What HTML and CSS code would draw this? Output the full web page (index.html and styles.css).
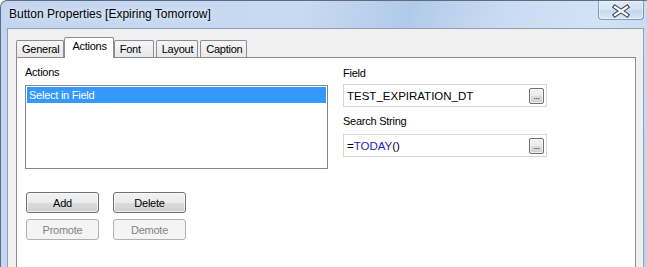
FILE: index.html
```html
<!DOCTYPE html>
<html lang="en">
<head>
    <meta charset="UTF-8">
    <title>Button Properties</title>
    <link rel="stylesheet" href="styles.css">
</head>
<body>
    <div class="window">
        <div class="titlebar">
            <span class="title">Button Properties [Expiring Tomorrow]</span>
            <div class="close">
                <svg width="44" height="18" viewBox="0 0 44 18">
                    <path d="M16 6 L28 14 M28 6 L16 14" stroke="#3b4658" stroke-width="4.4" stroke-linecap="square" fill="none"/>
                    <path d="M16 6 L28 14 M28 6 L16 14" stroke="#ffffff" stroke-width="2.2" stroke-linecap="square" fill="none"/>
                </svg>
            </div>
        </div>

        <div class="client">
            <div class="tabs">
                <div class="tab">General</div>
                <div class="tab active">Actions</div>
                <div class="tab">Font</div>
                <div class="tab">Layout</div>
                <div class="tab">Caption</div>
            </div>

            <div class="panel">
                <div class="col-left">
                    <div class="label">Actions</div>
                    <div class="listbox">
                        <div class="item selected">Select in Field</div>
                    </div>
                    <div class="buttons">
                        <button class="btn">Add</button>
                        <button class="btn">Delete</button>
                        <button class="btn" disabled>Promote</button>
                        <button class="btn" disabled>Demote</button>
                    </div>
                </div>

                <div class="col-right">
                    <div class="label">Field</div>
                    <div class="field">
                        <span class="value">TEST_EXPIRATION_DT</span>
                        <button class="dots">...</button>
                    </div>
                    <div class="label label-gap">Search String</div>
                    <div class="field">
                        <span class="value">=<span class="fn">TODAY</span>()</span>
                        <button class="dots">...</button>
                    </div>
                </div>
            </div>
        </div>
    </div>
</body>
</html>
```

FILE: styles.css
```css
body {
    margin: 0;
    height: 267px;
    overflow: hidden;
    background: #fff;
    font-family: "Liberation Sans", Arial, sans-serif;
}
.window {
    width: 652px;
    height: 267px;
    box-sizing: border-box;
    border: 1px solid #5f6d80;
    border-bottom: none;
    border-radius: 7px 7px 0 0;
    padding: 0 7px 0 6px;
    display: flex;
    flex-direction: column;
    background: linear-gradient(105deg, #c3d6ef 0%, #c8daf1 42%, #b2cae9 57%, #c9dbf2 70%, #d3e3f6 84%, #bcd1ed 100%);
}
.titlebar {
    display: flex;
    height: 27px;
}
.title {
    padding: 6px 0 0 2px;
    font-size: 12px;
    line-height: 15px;
    color: #000;
    text-shadow: 0 0 6px rgba(255,255,255,0.9);
}
.close {
    margin-left: auto;
    width: 46px;
    height: 19px;
    box-sizing: border-box;
    border: 1px solid rgba(55,75,105,0.5);
    border-top: none;
    border-radius: 0 0 4px 4px;
    box-shadow: inset 0 0 0 1px rgba(255,255,255,0.45);
    background: linear-gradient(rgba(255,255,255,0.3), rgba(255,255,255,0.1) 50%, rgba(120,150,190,0.12) 50%, rgba(255,255,255,0.2));
    display: flex;
    align-items: center;
    justify-content: center;
}
.client {
    flex: 1;
    min-height: 0;
    border: 1px solid #8e9fb6;
    border-bottom: none;
    background: #f0f0f0;
    padding: 8px 7px 0 8px;
    display: flex;
    flex-direction: column;
}
.tabs {
    display: flex;
    align-items: flex-end;
    gap: 2px;
}
.tab {
    height: 17px;
    min-width: 40px;
    box-sizing: border-box;
    border: 1px solid #898c95;
    border-bottom: none;
    border-radius: 2px 2px 0 0;
    padding: 2px 4px 0 5px;
    font-size: 11px;
    letter-spacing: -0.25px;
    line-height: 13px;
    color: #000;
    background: linear-gradient(#f5f5f5, #e8e8e8);
}
.tab.active {
    height: 21px;
    margin: 0 -2px -1px;
    padding: 2px 6px 0 7px;
    background: #fff;
    position: relative;
    z-index: 1;
}
.panel {
    flex: 1;
    min-height: 0;
    background: #fff;
    border: 1px solid #898c95;
    border-bottom: none;
    padding: 8px 0 0 8px;
    display: flex;
    gap: 15px;
}
.label {
    font-size: 11px;
    letter-spacing: -0.25px;
    line-height: 13px;
    height: 13px;
    color: #000;
}
.col-left {
    width: 303px;
}
.col-left .label {
    margin-bottom: 6px;
}
.listbox {
    height: 84px;
    box-sizing: border-box;
    border: 1px solid #828790;
    padding: 1px;
}
.item {
    height: 16px;
    line-height: 16px;
    padding-left: 2px;
    font-size: 11px;
    letter-spacing: -0.25px;
}
.item.selected {
    background: #3399ff;
    color: #fff;
}
.buttons {
    margin: 23px 0 0 1px;
    display: grid;
    grid-template-columns: 73px 73px;
    column-gap: 14px;
    row-gap: 6px;
}
.btn {
    height: 21px;
    box-sizing: border-box;
    border: 1px solid #707070;
    border-radius: 3px;
    padding: 0;
    box-shadow: inset 0 0 0 1px rgba(255,255,255,0.6);
    background: linear-gradient(#f2f2f2, #ebebeb 50%, #dddddd 50%, #cfcfcf);
    font-family: "Liberation Sans", Arial, sans-serif;
    font-size: 11px;
    letter-spacing: -0.25px;
    color: #000;
}
.btn:disabled {
    border-color: #adb2b5;
    box-shadow: none;
    background: #f4f4f4;
    color: #838383;
}
.col-right {
    width: 204px;
    padding-top: 1px;
}
.col-right .label {
    margin-bottom: 4px;
}
.col-right .label-gap {
    margin-top: 8px;
    margin-bottom: 6px;
}
.field {
    height: 23px;
    box-sizing: border-box;
    border: 1px solid #d6d6d6;
    background: #fff;
    display: flex;
    align-items: center;
    padding: 0 2px 0 3px;
    font-size: 11.5px;
    color: #000;
}
.value {
    flex: 1;
}
.fn {
    color: #1f1fc0;
}
.dots {
    width: 15px;
    height: 16px;
    box-sizing: border-box;
    border: 1px solid #707070;
    border-radius: 2px;
    padding: 0 0 2px;
    box-shadow: inset 0 0 0 1px rgba(255,255,255,0.6);
    background: linear-gradient(#f2f2f2, #ebebeb 50%, #dddddd 50%, #cfcfcf);
    display: flex;
    align-items: flex-end;
    justify-content: center;
    font-family: "Liberation Sans", Arial, sans-serif;
    font-size: 9px;
    line-height: 9px;
    letter-spacing: -0.5px;
    color: #222;
}
```
